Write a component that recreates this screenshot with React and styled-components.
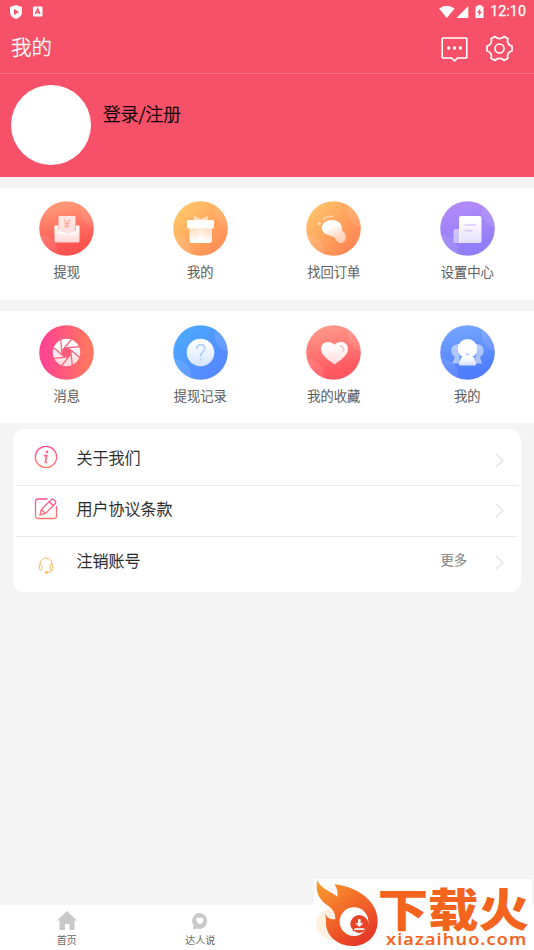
import React from 'react'
import styled, { createGlobalStyle } from 'styled-components'

const GlobalStyle = createGlobalStyle`
  * {
    box-sizing: border-box;
  }

  body {
    margin: 0;
    background-color: #f4f4f4;
    font-family: 'Noto Sans CJK SC', 'Noto Sans', sans-serif;
  }

  svg {
    display: block;
    flex-shrink: 0;
  }
`

const Page = styled.div`
  height: 950px;
  display: flex;
  flex-direction: column;
  overflow: hidden;
`

const StatusBar = styled.div`
  height: 23px;
  padding: 0 8px 0 10px;
  display: flex;
  align-items: center;
  justify-content: space-between;
  color: #fff;
  background-color: #f65168;
`
const StatusGroup = styled.div`
  display: flex;
  align-items: center;
`
const Clock = styled.span`
  font-family: Roboto, sans-serif;
  font-size: 14.2px;
  line-height: 23px;
  font-weight: 400;
  letter-spacing: 0.1px;
  margin-left: 5px;
  -webkit-text-stroke: 0.25px;
`

const Header = styled.header`
  height: 51px;
  padding: 0 21px 2px 11px;
  display: flex;
  align-items: center;
  justify-content: space-between;
  background-color: #f65168;
  border-bottom: 1px solid #fb6f83;
`
const Title = styled.h1`
  margin: 0;
  padding-bottom: 2px;
  color: #fff;
  font-size: 20.5px;
  line-height: 30px;
  font-weight: 300;
  -webkit-text-stroke: 0.35px;
`
const HeaderActions = styled.div`
  padding-top: 2px;
  display: flex;
  gap: 18px;
`

const Profile = styled.section`
  height: 103px;
  padding: 11px 11px 0;
  display: flex;
  gap: 12px;
  background-color: #f65168;
`
const Avatar = styled.div`
  width: 80px;
  height: 80px;
  border-radius: 50%;
  background-color: #fff;
`
const LoginText = styled.span`
  padding-top: 15px;
  color: #000;
  font-size: 17.8px;
  line-height: 26px;
  font-weight: 300;
  -webkit-text-stroke: 0.35px;
`

const MenuGrid = styled.section`
  height: 112px;
  margin-top: 11px;
  padding-top: ${props => props.top};
  display: grid;
  grid-template-columns: repeat(4, 1fr);
  background-color: #fff;
`
const MenuItem = styled.div`
  display: flex;
  flex-direction: column;
  align-items: center;
`
const MenuLabel = styled.span`
  margin-top: 5px;
  color: #505050;
  font-size: 13.3px;
  line-height: 22px;
  font-weight: 300;
  -webkit-text-stroke: 0.25px;
`

const Card = styled.section`
  height: 163px;
  margin: 6px 13px 0;
  padding: 0 3px;
  border-radius: 11px;
  background-color: #fff;
`
const Row = styled.div`
  height: ${props => props.height};
  padding: 0 14px ${props => props.lift || '0'} 18px;
  display: flex;
  align-items: center;
  border-bottom: ${props => (props.last ? 'none' : '1.5px solid #ebebeb')};
`
const RowIcon = styled.div`
  width: 24px;
  display: flex;
  justify-content: center;
  padding-top: ${props => props.drop || '0'};
`
const RowText = styled.span`
  flex: 1;
  margin-left: 18.5px;
  color: #222;
  font-size: 16px;
  line-height: 24px;
  font-weight: 300;
  -webkit-text-stroke: 0.3px;
`
const RowMore = styled.span`
  margin-right: 28px;
  color: #777;
  font-size: 13.3px;
  line-height: 20px;
  font-weight: 300;
  -webkit-text-stroke: 0.25px;
`
const ArrowBox = styled.div`
  padding-top: ${props => props.drop};
`

const TabBar = styled.nav`
  position: relative;
  height: 45px;
  margin-top: auto;
  display: grid;
  grid-template-columns: repeat(4, 1fr);
  background-color: #fff;
`
const Tab = styled.div`
  padding-top: 6px;
  display: flex;
  flex-direction: column;
  align-items: center;
`
const TabLabel = styled.span`
  margin-top: 1px;
  color: #666;
  font-size: 10px;
  line-height: 16px;
`
// sits on top of the last two tabs
const Watermark = styled.div`
  position: absolute;
  right: 2px;
  bottom: 0;
  width: 218px;
  height: 71px;
  background-color: #fff;
`
const LogoSvg = styled.svg`
  overflow: visible;
`

function Disc({ id, from, to, angled, plain, children }) {
  return (
    <svg width="55" height="55" viewBox="0 0 55 55">
      <defs>
        <linearGradient id={id} x1="0" y1="0" x2={angled ? 1 : plain ? 1 : 0.2} y2={plain ? 0 : 1}>
          <stop offset="0.1" stopColor={from} />
          <stop offset="0.9" stopColor={to} />
        </linearGradient>
        <linearGradient id={`${id}Fade`} x1="0" y1="0" x2="0" y2="1">
          <stop offset="0.1" stopColor="#fff" />
          <stop offset="1" stopColor="#fff" stopOpacity="0.75" />
        </linearGradient>
        <clipPath id={`${id}Clip`}>
          <circle cx="27.5" cy="27.5" r="27.3" />
        </clipPath>
      </defs>
      <circle cx="27.5" cy="27.5" r="27.3" fill={`url(#${id})`} />
      {!plain && (
        <g clipPath={`url(#${id}Clip)`} fill="#fff" fillOpacity="0.1">
          <circle cx="58" cy="10" r="16.5" />
          <circle cx="2" cy="50" r="16" />
        </g>
      )}
      {children}
    </svg>
  )
}

function WithdrawIcon() {
  return (
    <Disc id="withdraw" from="#ff9b7a" to="#ff5350">
      <rect x="19.5" y="15" width="17" height="18" rx="1" fill="#fff" fillOpacity="0.8" />
      <path d="M15.5 24.5h3.8v5.2l9 3 8.8-3v-5.2h3.4V40a1.5 1.5 0 0 1-1.500 1.500H17a1.500 1.500 0 0 1-1.500-1.500z" fill="url(#withdrawFade)" />
      <path d="M25 18.500l3 4 3-4M28 22v5.500M25.200 22.700h5.600M25.200 25.200h5.600" fill="none" stroke="#ffa495" strokeWidth="1.100" />
    </Disc>
  )
}

function GiftIcon() {
  return (
    <Disc id="gift" from="#ffc869" to="#ff8b56" angled>
      <path d="M21 15l7 3 7-3v6H21z" fill="#fff" fillOpacity="0.55" />
      <path d="M16.500 26h22.500v13.500a2.500 2.500 0 0 1-2.500 2.500H19a2.500 2.500 0 0 1-2.500-2.500z" fill="url(#giftBox)" />
      <rect x="25" y="28" width="5.500" height="11" fill="#fff" fillOpacity="0.35" />
      <rect x="14" y="19" width="27" height="8.500" rx="1.500" fill="#fff" />
      <defs>
        <linearGradient id="giftBox" x1="0" y1="0" x2="0" y2="1">
          <stop offset="0" stopColor="#fff" stopOpacity="0.550" />
          <stop offset="0.850" stopColor="#fff" stopOpacity="0.980" />
        </linearGradient>
      </defs>
    </Disc>
  )
}

function FindIcon() {
  return (
    <Disc id="find" from="#ffc46a" to="#ff8252" angled>
      <circle cx="13.300" cy="22.500" r="1.800" fill="#fff" fillOpacity="0.5" />
      <path d="M17.500 18.500c2.500-3 6-3.800 9-3" fill="none" stroke="#fff" strokeOpacity="0.45" strokeWidth="1.500" strokeLinecap="round" />
      <path d="M26 19c5.500 0 9.800 3.300 10 8 .1 2.500.8 3.500 2.500 5 3 2.800 1.500 9-3 10-4 .5-5.300-3-7-5.300-1-1.200-2.500-1.200-4-1.700-5.500-1.500-8.800-4.500-8.500-8.500.3-4.300 4.500-7.500 10-7.500z" fill="url(#findShade)" />
      <defs>
        <linearGradient id="findShade" x1="0.3" y1="0" x2="0.800" y2="1">
          <stop offset="0.250" stopColor="#fff" />
          <stop offset="0.700" stopColor="#fff" stopOpacity="0.620" />
          <stop offset="1" stopColor="#fff" stopOpacity="0.550" />
        </linearGradient>
      </defs>
    </Disc>
  )
}

function SettingIcon() {
  return (
    <Disc id="setting" from="#b38af8" to="#917ef8">
      <path d="M15.500 28h5v14h-5a2 2 0 0 1-2-2V30a2 2 0 0 1 2-2z" fill="#fff" fillOpacity="0.5" />
      <path d="M21 15h18.500a2 2 0 0 1 2 2v23a2 2 0 0 1-2 2H19V17a2 2 0 0 1 2-2z" fill="url(#settingFade)" />
      <path d="M24.500 24h11.500M24.500 29.700h8" stroke="#c9b6fb" strokeOpacity="0.7" strokeWidth="1.700" />
    </Disc>
  )
}

function MessageIcon() {
  return (
    <Disc id="message" from="#ff4592" to="#ff7660" plain>
      <circle cx="27.500" cy="27.500" r="13.700" fill="url(#messageFade)" />
      <circle cx="27.500" cy="27.500" r="4.500" fill="#ff5c79" />
      {[0, 45, 90, 135, 180, 225, 270, 315].map(angle => (
        <path
          key={angle}
          d="M23.300 25.500L32.500 14.300"
          transform={`rotate(${angle} 27.500 27.500)`}
          stroke="#ff5c79"
          strokeWidth="1.200"
        />
      ))}
    </Disc>
  )
}

function RecordIcon() {
  return (
    <Disc id="record" from="#4babff" to="#5784ff" angled>
      <circle cx="27.500" cy="27.500" r="13.800" fill="url(#recordFade)" />
      <path d="M23.700 24c0-5.500 8-5.500 8-.8 0 3.500-4 3.500-4 8.300" fill="none" stroke="#b3d3ff" strokeWidth="1.900" />
      <circle cx="27.600" cy="34.500" r="1.200" fill="#b3d3ff" />
    </Disc>
  )
}

function FavoriteIcon() {
  return (
    <Disc id="favorite" from="#ff9989" to="#ff5860">
      <path d="M28.500 39.500c-5.200-4-13.500-8.700-13.500-15.500 0-7 8.500-9.500 13.500-4.300C33.500 14.500 42 17 42 24c0 6.800-8.300 11.500-13.500 15.500z" fill="url(#favoriteFade)" />
      <path d="M34 21c3.500 0 4.500 3 3 5.500" fill="none" stroke="#ffc0ba" strokeWidth="1.400" strokeLinecap="round" />
    </Disc>
  )
}

function PeopleIcon() {
  return (
    <Disc id="people" from="#74a5ff" to="#507eff">
      <g fill="#fff" fillOpacity="0.5">
        <path d="M19 19c-6 0-8.500 4-7.500 8 .5 2.500 2 4 3.500 5l-3 6.500h8z" />
        <path d="M36 19c6 0 8.500 4 7.500 8-.5 2.500-2 4-3.500 5l2 6.500H35z" />
      </g>
      <path d="M21.500 32h12.500l2 6.500a1.500 1.500 0 0 1-1.500 2H20.500a1.500 1.500 0 0 1-1.500-2z" fill="url(#peopleFade)" />
      <circle cx="27.500" cy="23.700" r="9.700" fill="#fff" />
      <path d="M25.500 28.500h4a2 2 0 0 1-4 0z" fill="#b4caff" />
    </Disc>
  )
}

function Arrow() {
  return (
    <svg width="9" height="15" viewBox="0 0 9 15">
      <path d="M1 1l7 6.500L1 14" fill="none" stroke="#e0e0e0" strokeWidth="1.100" />
    </svg>
  )
}

function PinkGradient({ id }) {
  return (
    <linearGradient id={id} x1="0" y1="0" x2="0" y2="24" gradientUnits="userSpaceOnUse">
      <stop offset="0" stopColor="#ff4896" />
      <stop offset="1" stopColor="#ff8068" />
    </linearGradient>
  )
}

function AboutIcon() {
  return (
    <svg width="24" height="24" viewBox="0 0 24 24" fill="none" stroke="url(#aboutLine)">
      <defs>
        <PinkGradient id="aboutLine" />
      </defs>
      <circle cx="12" cy="12" r="10.700" strokeWidth="1.300" />
      <circle cx="13" cy="6.900" r="1.300" fill="#ff5b88" stroke="none" />
      <path d="M10 10.600h2.600l-1.200 6.200q-.2 1.200 1.800.7" strokeWidth="1.700" />
    </svg>
  )
}

function AgreementIcon() {
  return (
    <svg width="24" height="24" viewBox="0 0 24 24" fill="none" stroke="url(#editLine)" strokeWidth="1.300">
      <defs>
        <PinkGradient id="editLine" />
      </defs>
      <path d="M13.500 2H4a2.500 2.500 0 0 0-2.500 2.500V19A2.500 2.500 0 0 0 4 21.500h16a2.500 2.500 0 0 0 2.500-2.500V9" />
      <path d="M6 18l1.300-5.500L17 2.900c1-1 2-.9 2.900 0l1.200 1.200c.9.900.9 1.800 0 2.700L11.500 16.500zM15.200 4.700l4.100 4.100M7.300 12.500l4.200 4" />
    </svg>
  )
}

function ServiceIcon() {
  return (
    <svg width="16" height="17" viewBox="0 0 16 17" fill="none" stroke="#f6b95d" strokeWidth="1">
      <path d="M2 8V7a6 6 0 0 1 12 0v1M14 13c0 1.500-2 2.500-4.500 2.500" />
      <rect x="1.300" y="7.300" width="2.600" height="5.600" rx="1.200" />
      <rect x="12.100" y="7.300" width="2.600" height="5.600" rx="1.200" />
      <circle cx="8.500" cy="15.400" r="1" fill="#f2a53a" />
    </svg>
  )
}

function Logo() {
  return (
    <LogoSvg width="218" height="71" viewBox="42 27 654 213">
      <defs>
        <linearGradient id="flame" x1="0" y1="0" x2="0.6" y2="1">
          <stop offset="0" stopColor="#f8a02f" />
          <stop offset="0.55" stopColor="#f26829" />
          <stop offset="1" stopColor="#e63a26" />
        </linearGradient>
      </defs>
      <circle cx="97" cy="162" r="48" fill="#fff0e2" />
      <path d="M51 30C64 58 92 64 112 80c3-14-2-27-9-37 62 5 130 47 130 109 0 46-33 76-75 76-50 0-82-36-80-72 1-12-2-18-3-26 7 16 19 20 31 17 0-17-6-29-24-41C56 88 46 66 51 30z" fill="url(#flame)" />
      <circle cx="162" cy="155" r="43" fill="#fff" />
      <circle cx="178" cy="162" r="27" fill="#e94428" />
      <path d="M174 148h8v12h8l-12 11-12-11h8zM163 175h30v5h-30z" fill="#fff" />
      <g fill="#f3641f" stroke="#f3641f">
        <text x="233" y="170" fontFamily="'Noto Sans CJK SC', sans-serif" fontSize="137" fontWeight="900" strokeWidth="0" textLength="454" lengthAdjust="spacingAndGlyphs">下载火</text>
        <text x="258" y="224" fontFamily="'Open Sans', 'Noto Sans', sans-serif" fontSize="46" fontWeight="600" strokeWidth="0.5" letterSpacing="3" textLength="424" lengthAdjust="spacingAndGlyphs">xiazaihuo.com</text>
      </g>
    </LogoSvg>
  )
}

const firstMenu = [
  { label: '提现', Icon: WithdrawIcon },
  { label: '我的', Icon: GiftIcon },
  { label: '找回订单', Icon: FindIcon },
  { label: '设置中心', Icon: SettingIcon }
]
const secondMenu = [
  { label: '消息', Icon: MessageIcon },
  { label: '提现记录', Icon: RecordIcon },
  { label: '我的收藏', Icon: FavoriteIcon },
  { label: '我的', Icon: PeopleIcon }
]

function Menu({ items, top }) {
  return (
    <MenuGrid top={top}>
      {items.map(({ label, Icon }) => (
        <MenuItem key={label}>
          <Icon />
          <MenuLabel>{label}</MenuLabel>
        </MenuItem>
      ))}
    </MenuGrid>
  )
}

function App() {
  return (
    <>
      <GlobalStyle />
      <Page>
        <StatusBar>
          <StatusGroup>
            <svg width="12" height="14" viewBox="0 0 12 14">
              <path d="M6 0l6 2v5c0 3.500-3 6-6 7-3-1-6-3.500-6-7V2z" fill="#fff" />
              <path d="M4 4l5 3-5 3z" fill="#f65168" />
            </svg>
            <svg width="32" height="12" viewBox="0 0 32 12">
              <rect x="11" y="0.500" width="9.500" height="10" rx="1" fill="#fff" />
              <path d="M13.300 8l2.400-5.300L18.100 8M14.300 6.500h3" fill="none" stroke="#f65168" strokeWidth="1.300" />
            </svg>
          </StatusGroup>
          <StatusGroup>
            <svg width="46" height="14" viewBox="0 0 46 14" fill="#fff">
              <path d="M0 3.500q7.800-5.500 15.600 0L7.800 13z" />
              <path d="M29.300 1v12H17.500z" />
              <path d="M36.500 1.500h2V0h4v1.500h2V13h-8z" />
              <path d="M41.500 3l-3.500 5h2l-.7 3.500L43 6.500h-2z" fill="#f65168" />
            </svg>
            <Clock>12:10</Clock>
          </StatusGroup>
        </StatusBar>
        <Header>
          <Title>我的</Title>
          <HeaderActions>
            <svg width="27" height="27" viewBox="0 0 27 27">
              <path d="M2 3h23a.8.8 0 0 1 .8.800v18.400a.8.8 0 0 1-.8.800h-8.500l-3 2.800-3-2.800H2a.8.8 0 0 1-.8-.8V3.800A.8.8 0 0 1 2 3z" fill="none" stroke="#fff" strokeWidth="1.600" />
              <g fill="#fff">
                <circle cx="7.700" cy="13" r="1.700" />
                <circle cx="13.500" cy="13" r="1.700" />
                <circle cx="19.300" cy="13" r="1.700" />
              </g>
            </svg>
            <svg width="27" height="27" viewBox="0 0 27 27" fill="none" stroke="#fff" strokeWidth="1.700" strokeLinejoin="round">
              <path d="M9 1.500c2 2.800 7 2.800 9 0l4 2.300c-1.400 3.300.6 6.700 4 7.200v5c-3.400.500-5.400 3.900-4 7.200l-4 2.300c-2-2.800-7-2.800-9 0l-4-2.300c1.400-3.300-.6-6.700-4-7.200v-5c3.400-.5 5.400-3.900 4-7.200z" />
              <circle cx="13.500" cy="13.500" r="4.500" />
            </svg>
          </HeaderActions>
        </Header>
        <Profile>
          <Avatar />
          <LoginText>登录/注册</LoginText>
        </Profile>
        <Menu items={firstMenu} top="13px" />
        <Menu items={secondMenu} top="14px" />
        <Card>
          <Row height="57px">
            <RowIcon><AboutIcon /></RowIcon>
            <RowText>关于我们</RowText>
            <ArrowBox drop="6px"><Arrow /></ArrowBox>
          </Row>
          <Row height="51px" lift="6px">
            <RowIcon drop="2px"><AgreementIcon /></RowIcon>
            <RowText>用户协议条款</RowText>
            <ArrowBox drop="5px"><Arrow /></ArrowBox>
          </Row>
          <Row height="50px" lift="4px" last>
            <RowIcon drop="11px"><ServiceIcon /></RowIcon>
            <RowText>注销账号</RowText>
            <RowMore>更多</RowMore>
            <ArrowBox drop="5px"><Arrow /></ArrowBox>
          </Row>
        </Card>
        <TabBar>
          <Tab>
            <svg width="20" height="20" viewBox="0 0 20 20">
              <path d="M10 0l10 9.500h-2.500V19h-5v-6H8v6H2.500V9.500H0z" fill="#c9c9c9" />
            </svg>
            <TabLabel>首页</TabLabel>
          </Tab>
          <Tab>
            <svg width="20" height="20" viewBox="0 0 20 20">
              <path d="M10 2a8 8 0 1 1-3.500 15.500L3 18.500l.5-4A8 8 0 0 1 10 2z" fill="#c9c9c9" />
              <path d="M10 13.500C3 9 8 4.500 10 7.500c2-3 7 1.500 0 6z" fill="#fff" />
            </svg>
            <TabLabel>达人说</TabLabel>
          </Tab>
          <Watermark>
            <Logo />
          </Watermark>
        </TabBar>
      </Page>
    </>
  )
}

export default App
